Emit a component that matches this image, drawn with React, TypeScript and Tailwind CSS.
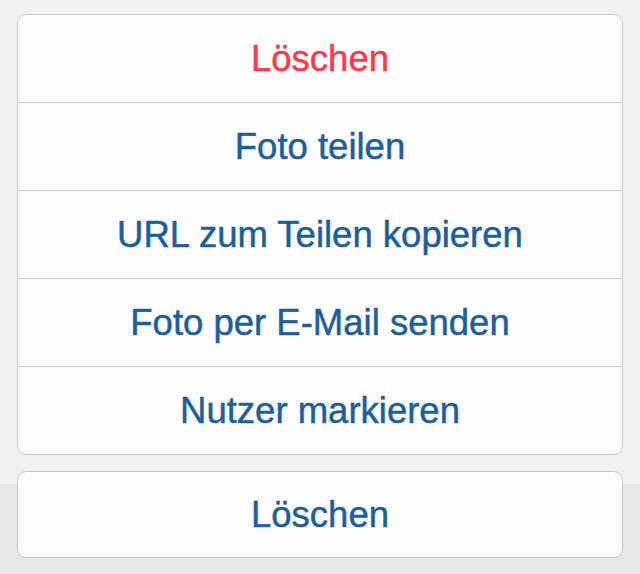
import React from "react";

const items = [
  { label: "Löschen", red: true },
  { label: "Foto teilen" },
  { label: "URL zum Teilen kopieren" },
  { label: "Foto per E-Mail senden" },
  { label: "Nutzer markieren" },
];

export default function App() {
  return (
    <div
      className="w-[640px] h-[574px] overflow-hidden bg-[linear-gradient(to_bottom,#f2f2f2_484px,#e7e7e7_484px)] pt-[14px] px-[17px]"
      style={{ fontFamily: '"Liberation Sans", Arial, sans-serif' }}
    >
      <div className="rounded-[9px] border border-[#c9c9c9] bg-[#fdfdfd] overflow-hidden">
        {items.map((it, i) => (
          <div
            key={i}
            className={
              "flex items-center justify-center text-[36.5px] [-webkit-text-stroke:0.5px_currentColor] " +
              (i > 0 ? "border-t border-[#cdcdcd] h-[88px] " : "h-[87px] ") +
              (it.red ? "text-[#fd3a4c]" : "text-[#1e5e9a]")
            }
          >
            <span className="translate-y-[1px]">{it.label}</span>
          </div>
        ))}
      </div>
      <div className="mt-[16px] rounded-[9px] border border-[#c9c9c9] bg-[#fdfdfd] h-[87px] flex items-center justify-center text-[36.5px] text-[#1e5e9a] [-webkit-text-stroke:0.5px_currentColor]">
        <span className="translate-y-[1px]">Löschen</span>
      </div>
    </div>
  );
}
